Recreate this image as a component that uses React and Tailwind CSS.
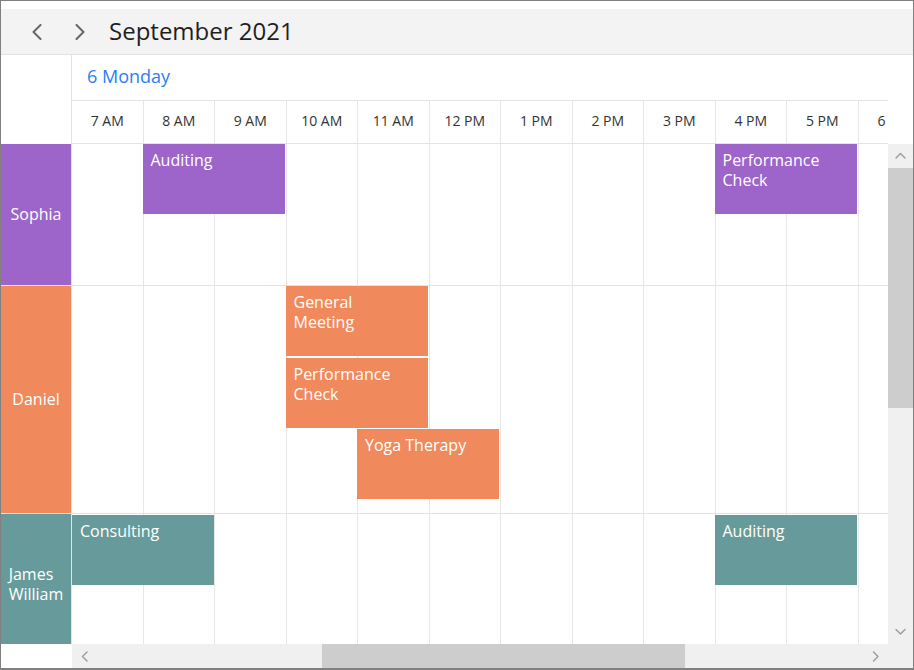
import React from 'react';

const COL = 71.5;
const HOURS = ['7 AM', '8 AM', '9 AM', '10 AM', '11 AM', '12 PM', '1 PM', '2 PM', '3 PM', '4 PM', '5 PM', '6 PM'];

const resources = [
  {
    name: ['Sophia'],
    color: 'bg-[#9d65c9]',
    height: 'h-[142px]',
    events: [
      { title: ['Auditing'], col: 1, span: 2, top: 0 },
      { title: ['Performance', 'Check'], col: 9, span: 2, top: 0 },
    ],
  },
  {
    name: ['Daniel'],
    color: 'bg-[#f08a5d]',
    height: 'h-[228px]',
    events: [
      { title: ['General', 'Meeting'], col: 3, span: 2, top: 0 },
      { title: ['Performance', 'Check'], col: 3, span: 2, top: 72 },
      { title: ['Yoga Therapy'], col: 4, span: 2, top: 143 },
    ],
  },
  {
    name: ['James', 'William'],
    color: 'bg-[#679b9b]',
    height: 'h-[142px]',
    events: [
      { title: ['Consulting'], col: 0, span: 2, top: 1 },
      { title: ['Auditing'], col: 9, span: 2, top: 1 },
    ],
  },
];

function Chevron({ dir, className }) {
  const pts = {
    left: '9,1 2,8 9,15',
    right: '2,1 9,8 2,15',
  };
  return (
    <svg viewBox="0 0 11 16" className={className} fill="none" stroke="currentColor" strokeWidth="2" strokeLinecap="round" strokeLinejoin="round">
      <polyline points={pts[dir]} />
    </svg>
  );
}

function SmallArrow({ dir }) {
  const pts = {
    up: '1,6 5.5,1.5 10,6',
    down: '1,1.5 5.5,6 10,1.5',
    left: '6,1 1.5,5.5 6,10',
    right: '1.5,1 6,5.5 1.5,10',
  };
  const size = dir === 'up' || dir === 'down' ? 'w-[11px] h-[8px]' : 'w-[8px] h-[11px]';
  const vb = dir === 'up' || dir === 'down' ? '0 0 11 8' : '0 0 8 11';
  return (
    <svg viewBox={vb} className={size + ' text-[#9a9a9a]'} fill="none" stroke="currentColor" strokeWidth="1.4" strokeLinecap="round" strokeLinejoin="round">
      <polyline points={pts[dir]} />
    </svg>
  );
}

function GridCells() {
  return (
    <div className="flex h-full">
      {HOURS.map((h) => (
        <div key={h} className="w-[71.5px] shrink-0 h-full border-r border-[#e6e6e6]" />
      ))}
    </div>
  );
}

export default function App() {
  return (
    <div className="w-[914px] h-[670px] border border-[#808080] border-b-2 bg-white flex flex-col overflow-hidden font-['Open_Sans','Segoe_UI',sans-serif]">
      <div className="h-[8px] shrink-0" />

      {/* Toolbar */}
      <div className="h-[46px] shrink-0 bg-[#f3f3f3] border-b border-[#e2e2e2] flex items-center pl-[30px]">
        <Chevron dir="left" className="w-[12px] h-[16px] text-[#666]" />
        <Chevron dir="right" className="w-[12px] h-[16px] text-[#666] ml-[31px]" />
        <span className="ml-[23px] text-[24px] leading-none text-[#1f1f1f] -mt-[2px]">September 2021</span>
      </div>

      {/* Date row */}
      <div className="h-[46px] shrink-0 flex">
        <div className="w-[71px] shrink-0 border-r border-[#e3e3e3]" />
        <div className="w-[816px] shrink-0 border-b border-[#e3e3e3] flex items-center pl-[15px]">
          <span className="text-[18px] text-[#2b7df8] -mt-[2px]">6 Monday</span>
        </div>
        <div className="flex-1" />
      </div>

      {/* Time header */}
      <div className="h-[43px] shrink-0 flex">
        <div className="w-[71px] shrink-0 border-r border-[#e3e3e3]" />
        <div className="w-[816px] shrink-0 border-b border-[#e3e3e3] overflow-hidden flex">
          {HOURS.map((h) => (
            <div key={h} className="w-[71.5px] shrink-0 border-r border-[#e6e6e6] flex items-center justify-center pb-[4px] text-[14px] text-[#333] whitespace-nowrap">
              {h}
            </div>
          ))}
        </div>
        <div className="flex-1" />
      </div>

      {/* Body */}
      <div className="h-[500px] shrink-0 flex">
        <div className="w-[71px] shrink-0 overflow-hidden flex flex-col">
          {resources.map((r) => (
            <div key={r.name.join(' ')} className={`${r.height} ${r.color} shrink-0 border-r border-b border-[#e3e3e3] flex items-center justify-center`}>
              <div className="text-[16px] leading-[20px] text-white text-left -mt-[2px]">
                {r.name.map((n) => (
                  <div key={n}>{n}</div>
                ))}
              </div>
            </div>
          ))}
        </div>

        <div className="w-[816px] shrink-0 overflow-hidden flex flex-col">
          {resources.map((r) => (
            <div key={r.name.join(' ')} className={`${r.height} shrink-0 relative border-b border-[#e3e3e3]`}>
              <GridCells />
              {r.events.map((e, i) => (
                <div
                  key={i}
                  className={`absolute ${r.color} h-[70px] pl-[8px] pt-[6px] text-[16px] leading-[20px] text-white whitespace-nowrap`}
                  style={{ left: Math.max(0, e.col * COL - 1), top: e.top, width: e.span * COL - 1 }}
                >
                  {e.title.map((t) => (
                    <div key={t}>{t}</div>
                  ))}
                </div>
              ))}
            </div>
          ))}
        </div>

        {/* Vertical scrollbar */}
        <div className="flex-1 bg-[#f0f0f0] flex flex-col">
          <div className="h-[24px] shrink-0 flex items-center justify-center">
            <SmallArrow dir="up" />
          </div>
          <div className="h-[240px] shrink-0 bg-[#cdcdcd]" />
          <div className="flex-1" />
          <div className="h-[24px] shrink-0 flex items-center justify-center">
            <SmallArrow dir="down" />
          </div>
        </div>
      </div>

      {/* Horizontal scrollbar */}
      <div className="h-[24px] shrink-0 flex">
        <div className="w-[71px] shrink-0" />
        <div className="w-[816px] shrink-0 bg-[#f0f0f0] flex items-center">
          <div className="w-[26px] shrink-0 flex items-center justify-center">
            <SmallArrow dir="left" />
          </div>
          <div className="w-[224px] shrink-0" />
          <div className="w-[363px] h-full shrink-0 bg-[#cdcdcd]" />
          <div className="flex-1" />
          <div className="w-[24px] shrink-0 flex items-center justify-center">
            <SmallArrow dir="right" />
          </div>
        </div>
        <div className="flex-1 bg-[#f0f0f0]" />
      </div>
    </div>
  );
}
